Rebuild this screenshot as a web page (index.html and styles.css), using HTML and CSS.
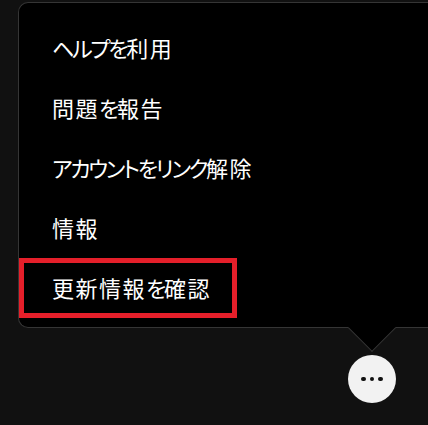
FILE: index.html
```html
<!DOCTYPE html>
<html lang="ja">
<head>
<meta charset="utf-8">
<link rel="stylesheet" href="styles.css">
</head>
<body>
<div class="page">
  <div class="menu">
    <ul class="menu-list">
      <li class="menu-item"><span class="kana">ヘルプを</span>利用</li>
      <li class="menu-item">問題<span class="kana">を</span>報告</li>
      <li class="menu-item"><span class="kana">アカウントをリンク</span>解除</li>
      <li class="menu-item">情報</li>
      <li class="menu-item highlighted">更新情報<span class="kana">を</span>確認</li>
    </ul>
    <span class="pointer"></span>
  </div>
  <div class="actions">
    <button class="more-btn" aria-label="その他">
      <span class="dot"></span><span class="dot"></span><span class="dot"></span>
    </button>
  </div>
</div>
</body>
</html>
```
FILE: styles.css
```css
html, body {
  margin: 0;
  padding: 0;
  background: #111111;
  overflow: hidden;
}
body {
  width: 428px;
  height: 425px;
  font-family: "Noto Sans CJK JP", "Noto Sans", sans-serif;
  color: #ffffff;
}
.page {
  padding-top: 2px;
  padding-left: 18px;
}
.menu {
  position: relative;
  width: 410px;
  height: 326px;
  box-sizing: border-box;
  background: #000000;
  border: 1px solid #353535;
  border-right: none;
  border-radius: 10px 0 0 10px;
}
.menu-list {
  list-style: none;
  margin: 0;
  padding: 15px 0 0 0;
  display: flex;
  flex-direction: column;
}
.menu-item {
  height: 60px;
  box-sizing: border-box;
  display: flex;
  align-items: center;
  padding-left: 33px;
  padding-bottom: 2px;
  font-size: 22px;
  line-height: 1;
  font-feature-settings: "palt";
  letter-spacing: 1.5px;
  white-space: nowrap;
}
.kana {
  letter-spacing: -2.3px;
}
.menu-item.highlighted {
  width: 218px;
  outline: 5px solid #e51f2a;
  outline-offset: -5px;
}
.pointer {
  position: absolute;
  left: 336px;
  bottom: -18px;
  width: 34px;
  height: 34px;
  box-sizing: border-box;
  background: #000000;
  border-right: 1px solid #353535;
  border-bottom: 1px solid #353535;
  transform: rotate(45deg);
}
.actions {
  display: flex;
  padding-top: 27px;
  padding-left: 330px;
}
.more-btn {
  width: 48px;
  height: 48px;
  border-radius: 50%;
  border: none;
  padding: 0;
  background: #f2f2f2;
  display: flex;
  align-items: center;
  justify-content: center;
  gap: 4px;
}
.dot {
  width: 4.5px;
  height: 4.5px;
  border-radius: 50%;
  background: #111111;
}
```
